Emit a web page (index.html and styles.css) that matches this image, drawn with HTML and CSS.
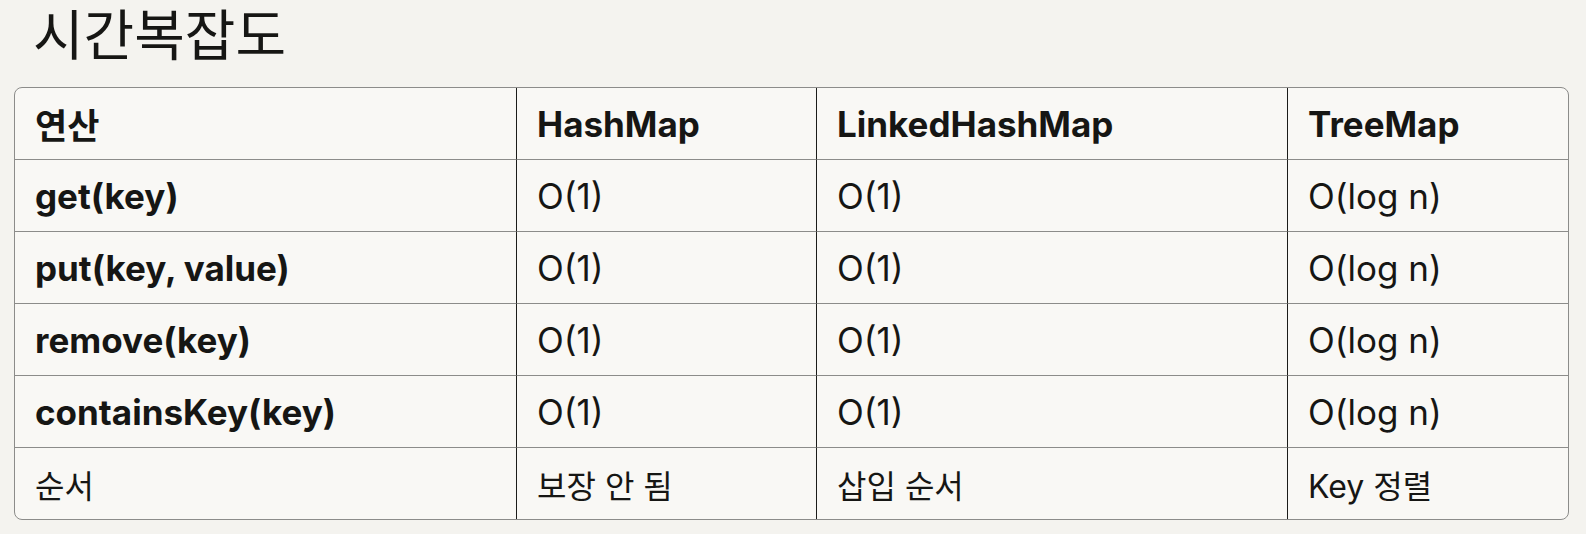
FILE: index.html
```html
<!DOCTYPE html>
<html lang="ko">
<head>
<meta charset="utf-8">
<title>시간복잡도</title>
<link rel="stylesheet" href="styles.css">
</head>
<body>
<h1 class="title">시간복잡도</h1>
<div class="table-wrap">
<table class="cmp">
  <colgroup>
    <col class="c1"><col class="c2"><col class="c3"><col class="c4">
  </colgroup>
  <thead>
    <tr><th>연산</th><th>HashMap</th><th>LinkedHashMap</th><th>TreeMap</th></tr>
  </thead>
  <tbody>
    <tr><td class="op">get(key)</td><td>O(1)</td><td>O(1)</td><td>O(log n)</td></tr>
    <tr><td class="op">put(key, value)</td><td>O(1)</td><td>O(1)</td><td>O(log n)</td></tr>
    <tr><td class="op">remove(key)</td><td>O(1)</td><td>O(1)</td><td>O(log n)</td></tr>
    <tr><td class="op">containsKey(key)</td><td>O(1)</td><td>O(1)</td><td>O(log n)</td></tr>
    <tr><td class="ko">순서</td><td class="ko">보장 안 됨</td><td class="ko">삽입 순서</td><td class="ko">Key 정렬</td></tr>
  </tbody>
</table>
</div>
</body>
</html>
```

FILE: styles.css
```css
html, body {
  margin: 0;
  padding: 0;
  background: #f4f3ef;
}
body {
  padding: 0 17px 0 14px;
  color: #161614;
  font-family: Inter, "Noto Sans CJK KR", sans-serif;
}
.title {
  margin: 0 0 25px 0;
  padding-left: 19px;
  font-family: "Noto Sans CJK KR", sans-serif;
  font-weight: 400;
  font-size: 55px;
  line-height: 62px;
  color: #161614;
}
.table-wrap {
  border: 1px solid #8c8c8a;
  border-radius: 8px;
  overflow: hidden;
  background: #f9f8f5;
}
.cmp {
  width: 100%;
  border-collapse: separate;
  border-spacing: 0;
  table-layout: fixed;
}
.c1 { width: 501px; }
.c2 { width: 300px; }
.c3 { width: 471px; }
.c4 { width: auto; }
.cmp th, .cmp td {
  height: 71px;
  padding: 0 20px;
  text-align: left;
  vertical-align: middle;
  font-size: 35px;
  white-space: nowrap;
}
.cmp th {
  font-weight: 700;
}
.cmp td {
  font-weight: 400;
  border-top: 1px solid #8c8c8a;
}
.cmp td.op {
  font-weight: 700;
}
.cmp th + th, .cmp td + td {
  border-left: 1px solid #1c1c1a;
}
.cmp td.ko {
  font-size: 32px;
  font-weight: 400;
}
```
